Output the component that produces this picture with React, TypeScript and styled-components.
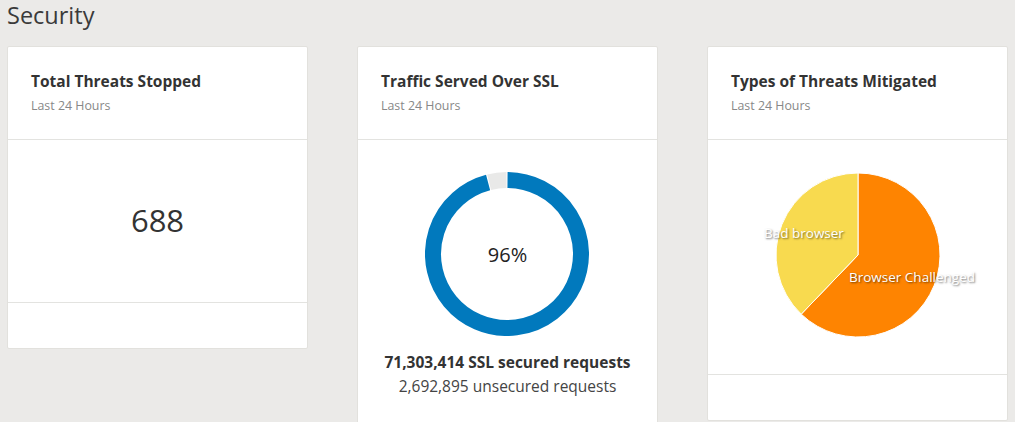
import * as React from "react";
import styled, { createGlobalStyle } from "styled-components";

const GlobalStyle = createGlobalStyle`
    html, body {
        margin: 0;
        padding: 0;
        background: #ebeae8;
        font-family: "Open Sans", "Liberation Sans", sans-serif;
        color: #333333;
    }
`;

const polar = (cx: number, cy: number, r: number, deg: number) => {
    const a = ((deg - 90) * Math.PI) / 180;
    return [cx + r * Math.cos(a), cy + r * Math.sin(a)];
};

const arc = (cx: number, cy: number, r: number, from: number, to: number) => {
    const [x1, y1] = polar(cx, cy, r, from);
    const [x2, y2] = polar(cx, cy, r, to);
    const large = to - from > 180 ? 1 : 0;
    return `M ${x1} ${y1} A ${r} ${r} 0 ${large} 1 ${x2} ${y2}`;
};

const slice = (cx: number, cy: number, r: number, from: number, to: number) => {
    const [x1, y1] = polar(cx, cy, r, from);
    const [x2, y2] = polar(cx, cy, r, to);
    const large = to - from > 180 ? 1 : 0;
    return `M ${cx} ${cy} L ${x1} ${y1} A ${r} ${r} 0 ${large} 1 ${x2} ${y2} Z`;
};

interface CardProps {
    title: string;
    children?: React.ReactNode;
    bodyHeight?: number;
}

const Card = ({ title, children, bodyHeight }: CardProps): JSX.Element => (
    <CardRoot>
        <CardHeader>
            <CardTitle>{title}</CardTitle>
            <CardSub>Last 24 Hours</CardSub>
        </CardHeader>
        <CardBody $height={bodyHeight}>{children}</CardBody>
        <CardFooter />
    </CardRoot>
);

const Donut = ({ percent }: { percent: number }): JSX.Element => {
    const split = percent * 3.6;
    return (
        <DonutWrap>
            <svg width="164" height="164" viewBox="0 0 164 164">
                <path d={arc(82, 82, 74, 0.4, split - 0.4)} fill="none" stroke="#0179bd" strokeWidth="16" />
                <path d={arc(82, 82, 74, split + 0.4, 359.6)} fill="none" stroke="#e9e9e8" strokeWidth="16" />
            </svg>
            <DonutLabel>{percent}%</DonutLabel>
        </DonutWrap>
    );
};

const Pie = (): JSX.Element => {
    const split = 223.8;
    return (
        <svg width="300" height="166" viewBox="0 0 300 166">
            <path d={slice(150, 83, 82, 0, split)} fill="#fe8401" stroke="#ffffff" strokeWidth="1" />
            <path d={slice(150, 83, 82, split, 360)} fill="#f8da4f" stroke="#ffffff" strokeWidth="1" />
            <PieText x="56" y="66">Bad browser</PieText>
            <PieText x="141" y="110">Browser Challenged</PieText>
        </svg>
    );
};

const App = (): JSX.Element => (
    <Page>
        <GlobalStyle />
        <Heading>Security</Heading>
        <Grid>
            <Card title="Total Threats Stopped" bodyHeight={162}>
                <BigNumber>688</BigNumber>
            </Card>
            <Card title="Traffic Served Over SSL">
                <SslBody>
                    <Donut percent={96} />
                    <Secured>71,303,414 SSL secured requests</Secured>
                    <Unsecured>2,692,895 unsecured requests</Unsecured>
                </SslBody>
            </Card>
            <Card title="Types of Threats Mitigated" bodyHeight={234}>
                <PieBody>
                    <Pie />
                </PieBody>
            </Card>
        </Grid>
    </Page>
);

export default App;

const Page = styled.div`
    padding: 0 7px;
    height: 422px;
    overflow: hidden;
`;

const Heading = styled.h1`
    margin: 0;
    padding-top: 1px;
    font-size: 23.5px;
    line-height: 28px;
    font-weight: 400;
    color: #3a3a3a;
`;

const Grid = styled.div`
    display: grid;
    grid-template-columns: repeat(3, 301px);
    column-gap: 49px;
    align-items: start;
    margin-top: 17px;
`;

const CardRoot = styled.div`
    background: #ffffff;
    border: 1px solid #e2e1dd;
    border-radius: 2px;
    display: flex;
    flex-direction: column;
`;

const CardHeader = styled.div`
    padding: 24px 23px 24px;
`;

const CardTitle = styled.div`
    font-size: 15.5px;
    line-height: 20px;
    font-weight: 700;
    color: #333333;
`;

const CardSub = styled.div`
    margin-top: 6px;
    font-size: 12.4px;
    line-height: 18px;
    color: #888888;
`;

const CardBody = styled.div<{ $height?: number }>`
    border-top: 1px solid #e3e3e0;
    ${(p) => (p.$height ? `height: ${p.$height}px;` : "")}
    display: flex;
    align-items: center;
    justify-content: center;
`;

const CardFooter = styled.div`
    border-top: 1px solid #e3e3e0;
    height: 45px;
`;

const BigNumber = styled.div`
    font-size: 31px;
    font-weight: 400;
    color: #333333;
    margin-top: -3px;
`;

const SslBody = styled.div`
    display: flex;
    flex-direction: column;
    align-items: center;
    padding: 32px 0 40px;
`;

const DonutWrap = styled.div`
    position: relative;
    width: 164px;
    height: 164px;
    & > svg {
        display: block;
    }
`;

const DonutLabel = styled.div`
    position: absolute;
    inset: 0;
    display: flex;
    align-items: center;
    justify-content: center;
    font-size: 20px;
    color: #222222;
`;

const Secured = styled.div`
    margin-top: 16px;
    font-size: 15.5px;
    line-height: 20px;
    font-weight: 700;
    color: #333333;
`;

const Unsecured = styled.div`
    margin-top: 4px;
    font-size: 15.5px;
    line-height: 20px;
    color: #444444;
`;

const PieBody = styled.div`
    padding-bottom: 4px;
    & > svg {
        display: block;
        overflow: visible;
    }
`;

const PieText = styled.text`
    font-size: 13.5px;
    fill: #ffffff;
    text-shadow: 1px 1px 2px rgba(0, 0, 0, 0.55);
`;
